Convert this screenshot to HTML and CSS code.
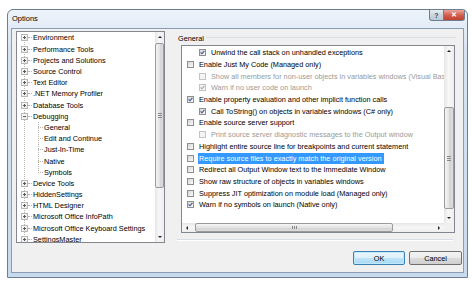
FILE: index.html
```html
<!DOCTYPE html>
<html lang="en">
<head>
  <meta charset="UTF-8">
  <title>Options</title>
  <link rel="stylesheet" href="styles.css">
</head>
<body>
  <div class="window">
    <div class="titlebar">
      <span class="title">Options</span>
      <div class="caption">
        <span class="cap-btn help">?</span>
        <span class="cap-btn close">✕</span>
      </div>
    </div>

    <div class="client">
      <div class="tree">
        <div class="tree-items">
          <div class="node"><span class="exp"></span><span class="dash"></span>Environment</div>
          <div class="node"><span class="exp"></span><span class="dash"></span>Performance Tools</div>
          <div class="node"><span class="exp"></span><span class="dash"></span>Projects and Solutions</div>
          <div class="node"><span class="exp"></span><span class="dash"></span>Source Control</div>
          <div class="node"><span class="exp"></span><span class="dash"></span>Text Editor</div>
          <div class="node"><span class="exp"></span><span class="dash"></span>.NET Memory Profiler</div>
          <div class="node"><span class="exp"></span><span class="dash"></span>Database Tools</div>
          <div class="node"><span class="exp minus"></span><span class="dash"></span>Debugging</div>
          <div class="children">
            <div class="leaf"><span class="dash"></span>General</div>
            <div class="leaf"><span class="dash"></span>Edit and Continue</div>
            <div class="leaf"><span class="dash"></span>Just-In-Time</div>
            <div class="leaf"><span class="dash"></span>Native</div>
            <div class="leaf"><span class="dash"></span>Symbols</div>
          </div>
          <div class="node"><span class="exp"></span><span class="dash"></span>Device Tools</div>
          <div class="node"><span class="exp"></span><span class="dash"></span>HiddenSettings</div>
          <div class="node"><span class="exp"></span><span class="dash"></span>HTML Designer</div>
          <div class="node"><span class="exp"></span><span class="dash"></span>Microsoft Office InfoPath</div>
          <div class="node"><span class="exp"></span><span class="dash"></span>Microsoft Office Keyboard Settings</div>
          <div class="node"><span class="exp"></span><span class="dash"></span>SettingsMaster</div>
        </div>
        <div class="vscroll tree-scroll">
          <div class="arrow"><span class="tri up"></span></div>
          <div class="track"><div class="thumb"><span class="grip"></span></div></div>
          <div class="arrow"><span class="tri down"></span></div>
        </div>
      </div>

      <div class="pane">
        <div class="group-head"><span>General</span><span class="rule"></span></div>

        <div class="list">
          <div class="rows">
            <div class="row sub"><span class="cb"><svg viewBox="0 0 5 5"><path d="M0.6 2.4 L2 3.8 L4.4 0.8"/></svg></span>Unwind the call stack on unhandled exceptions</div>
            <div class="row"><span class="cb"></span>Enable Just My Code (Managed only)</div>
            <div class="row sub off"><span class="cb"></span>Show all members for non-user objects in variables windows (Visual Basic only)</div>
            <div class="row sub off"><span class="cb"><svg viewBox="0 0 5 5"><path d="M0.6 2.4 L2 3.8 L4.4 0.8"/></svg></span>Warn if no user code on launch</div>
            <div class="row"><span class="cb"><svg viewBox="0 0 5 5"><path d="M0.6 2.4 L2 3.8 L4.4 0.8"/></svg></span>Enable property evaluation and other implicit function calls</div>
            <div class="row sub"><span class="cb"><svg viewBox="0 0 5 5"><path d="M0.6 2.4 L2 3.8 L4.4 0.8"/></svg></span>Call ToString() on objects in variables windows (C# only)</div>
            <div class="row"><span class="cb"></span>Enable source server support</div>
            <div class="row sub off"><span class="cb"></span>Print source server diagnostic messages to the Output window</div>
            <div class="row"><span class="cb"></span>Highlight entire source line for breakpoints and current statement</div>
            <div class="row"><span class="cb"></span><span class="hl">Require source files to exactly match the original version</span></div>
            <div class="row"><span class="cb"></span>Redirect all Output Window text to the Immediate Window</div>
            <div class="row"><span class="cb"></span>Show raw structure of objects in variables windows</div>
            <div class="row"><span class="cb"></span>Suppress JIT optimization on module load (Managed only)</div>
            <div class="row"><span class="cb"><svg viewBox="0 0 5 5"><path d="M0.6 2.4 L2 3.8 L4.4 0.8"/></svg></span>Warn if no symbols on launch (Native only)</div>
          </div>
          <div class="vscroll list-scroll">
            <div class="arrow"><span class="tri up"></span></div>
            <div class="track"><div class="thumb"><span class="grip"></span></div></div>
            <div class="arrow"><span class="tri down"></span></div>
          </div>
          <div class="hscroll">
            <div class="arrow"><span class="tri left"></span></div>
            <div class="track"><div class="thumb"><span class="grip"></span></div></div>
            <div class="arrow"><span class="tri right"></span></div>
          </div>
          <div class="corner"></div>
        </div>

        <div class="sep"></div>

        <div class="buttons">
          <div class="btn default">OK</div>
          <div class="btn">Cancel</div>
        </div>
      </div>
    </div>
  </div>
</body>
</html>
```

FILE: styles.css
```css
* {
  box-sizing: border-box;
}
body {
  margin: 0;
  background: #fff;
  font-family: "Liberation Sans", Arial, sans-serif;
  font-size: 7.3px;
  color: #000;
}
.window {
  margin: 9px 0 0 7px;
  width: 461px;
  height: 269px;
  border: 1px solid #6d7e90;
  border-radius: 6px 6px 0 0;
  background: linear-gradient(#edf3fa, #d6e4f2 40px, #c8daee);
  display: flex;
  flex-direction: column;
}
.titlebar {
  height: 18px;
  display: flex;
  align-items: flex-start;
  padding-left: 4px;
}
.title {
  margin-top: 4px;
  font-size: 7.5px;
}
.caption {
  margin-left: auto;
  margin-right: 2px;
  display: flex;
}
.cap-btn {
  height: 11px;
  display: flex;
  align-items: center;
  justify-content: center;
  border: 1px solid #6d7e90;
  border-top: none;
  font-size: 7px;
}
.help {
  width: 15px;
  border-radius: 0 0 0 3px;
  background: linear-gradient(#e6ecf2, #ccd6e1 50%, #bac7d5);
  color: #3b4b5e;
  font-weight: bold;
}
.close {
  width: 21px;
  border-left: none;
  border-radius: 0 0 3px 0;
  background: linear-gradient(#e9a79c, #d35f51 50%, #c2402f);
  color: #fff;
  font-weight: bold;
}
.client {
  flex: 1;
  margin: 0 3px 4px;
  border: 1px solid #8a9db2;
  background: #f0f0f0;
  display: flex;
  align-items: flex-start;
  padding: 2px 0 0 4px;
}

/* tree */
.tree {
  width: 149px;
  height: 212px;
  border: 1px solid #828790;
  background: #fff;
  display: flex;
}
.tree-items {
  flex: 1;
  overflow: hidden;
  white-space: nowrap;
  padding-top: 0.4px;
  background: repeating-linear-gradient(#b4b4b4 0 1px, transparent 1px 2px) 7px 6px / 1px 100% no-repeat;
}
.node, .leaf {
  height: 11.2px;
  display: flex;
  align-items: center;
}
.node {
  padding-left: 4px;
}
.leaf {
  padding-left: 21px;
}
.children {
  background: repeating-linear-gradient(#b4b4b4 0 1px, transparent 1px 2px) 21px 0 / 1px calc(100% - 5px) no-repeat;
}
.exp {
  width: 7px;
  height: 7px;
  flex: none;
  border: 1px solid #b8b8b8;
  background:
    linear-gradient(#5a5a5a, #5a5a5a) center / 3px 1px no-repeat,
    linear-gradient(#5a5a5a, #5a5a5a) center / 1px 3px no-repeat,
    linear-gradient(135deg, #fff, #e6e6e6);
}
.exp.minus {
  background:
    linear-gradient(#5a5a5a, #5a5a5a) center / 3px 1px no-repeat,
    linear-gradient(135deg, #fff, #e6e6e6);
}
.dash {
  width: 4px;
  flex: none;
  border-top: 1px dotted #b4b4b4;
  margin-right: 1px;
}
.leaf .dash {
  width: 5px;
}

/* scrollbars */
.vscroll {
  display: flex;
  flex-direction: column;
  background: linear-gradient(to right, #e6e6e6, #f7f7f7 45%, #eeeeee);
}
.tree-scroll {
  width: 9px;
}
.arrow {
  display: flex;
  align-items: center;
  justify-content: center;
  flex: none;
}
.vscroll .arrow {
  height: 10px;
}
.track {
  flex: 1;
  display: flex;
}
.vscroll .track {
  flex-direction: column;
}
.thumb {
  border: 1px solid #9b9b9b;
  border-radius: 2px;
  display: flex;
  align-items: center;
  justify-content: center;
}
.vscroll .thumb {
  background: linear-gradient(to right, #f4f4f4, #e4e4e4 50%, #d4d4d4 51%, #dcdcdc);
}
.tree-scroll .thumb {
  margin-top: 1px;
  height: 145px;
}
.grip {
  width: 4px;
  height: 5px;
  background: repeating-linear-gradient(#8a8a8a 0 1px, transparent 1px 2px);
}
.tri {
  width: 0;
  height: 0;
}
.tri.up {
  border-left: 2px solid transparent;
  border-right: 2px solid transparent;
  border-bottom: 2px solid #222;
}
.tri.down {
  border-left: 2px solid transparent;
  border-right: 2px solid transparent;
  border-top: 2px solid #222;
}
.tri.left {
  border-top: 2px solid transparent;
  border-bottom: 2px solid transparent;
  border-right: 2px solid #222;
}
.tri.right {
  border-top: 2px solid transparent;
  border-bottom: 2px solid transparent;
  border-left: 2px solid #222;
}

/* right pane */
.pane {
  margin-left: 11px;
  width: 286px;
  display: flex;
  flex-direction: column;
}
.group-head {
  height: 14px;
  display: flex;
  align-items: center;
  padding-left: 2px;
  margin-right: 6px;
}
.rule {
  flex: 1;
  margin-left: 2px;
  margin-top: -2px;
  border-top: 1px solid #d5dfe5;
}
.list {
  margin-left: 5px;
  width: 274px;
  height: 188px;
  border: 1px solid #828790;
  background: #fff;
  display: grid;
  grid-template-columns: 1fr 10px;
  grid-template-rows: 1fr 9px;
}
.rows {
  overflow: hidden;
  white-space: nowrap;
  padding-top: 1px;
}
.row {
  height: 11.7px;
  display: flex;
  align-items: center;
  padding-left: 5px;
}
.row.sub {
  padding-left: 17px;
}
.row.off {
  color: #9a9a9a;
}
.cb {
  width: 7px;
  height: 7px;
  flex: none;
  margin-right: 5px;
  border: 1px solid #8e8f8f;
  background: linear-gradient(135deg, #d6d6d6, #fbfbfb);
  display: flex;
}
.cb svg {
  width: 5px;
  height: 5px;
  fill: none;
  stroke: #3c5593;
  stroke-width: 1.1;
}
.off .cb {
  border-color: #c4c4c4;
  background: #f4f4f4;
}
.off .cb svg {
  stroke: #a8a8a8;
}
.hl {
  background: #3399ff;
  color: #fff;
  margin-left: -1px;
  padding: 1px 2px 1px 1px;
}
.list-scroll .thumb {
  margin-top: 51px;
  height: 102px;
}
.hscroll {
  display: flex;
  background: linear-gradient(#e6e6e6, #f7f7f7 45%, #eeeeee);
}
.hscroll .arrow {
  width: 10px;
}
.hscroll .thumb {
  margin-left: 3px;
  width: 198px;
  background: linear-gradient(#f4f4f4, #e4e4e4 50%, #d4d4d4 51%, #dcdcdc);
}
.hscroll .grip {
  width: 5px;
  height: 3px;
  background: repeating-linear-gradient(to right, #8a8a8a 0 1px, transparent 1px 2px);
}
.corner {
  background: #f0f0f0;
}
.sep {
  margin: 6px 0 0 1px;
  width: 276px;
  border-top: 1px solid #d5dfe5;
  border-bottom: 1px solid #fff;
}
.buttons {
  margin-top: 10px;
  display: flex;
  justify-content: flex-end;
  gap: 4px;
}
.btn {
  width: 53px;
  height: 14px;
  border: 1px solid #707070;
  border-radius: 2px;
  background: linear-gradient(#f3f3f3, #ebebeb 50%, #dcdcdc 51%, #cfcfcf);
  display: flex;
  align-items: center;
  justify-content: center;
}
.btn.default {
  width: 52px;
  border-color: #3c7fb1;
  background: linear-gradient(#ecf7fd, #dcf0fb 50%, #bfe4f8 51%, #a9d9f4);
  box-shadow: inset 0 0 0 1px #bfeafd;
}
```
